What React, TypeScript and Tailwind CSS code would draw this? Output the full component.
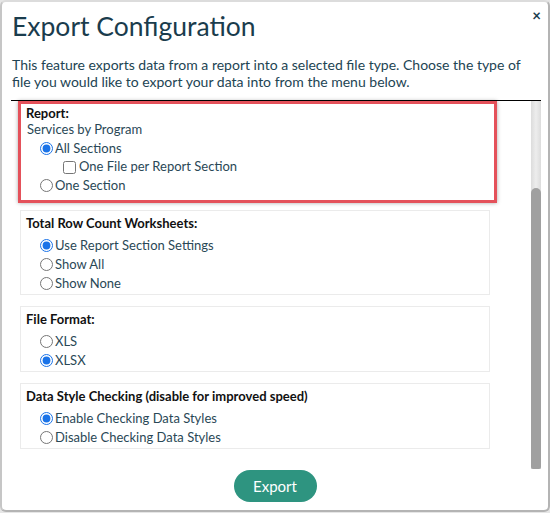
import { ReactNode } from 'react';

const font = { fontFamily: 'Lato, "Open Sans", Arial, sans-serif' };

function Radio({ label, checked, name }: { label: string; checked?: boolean; name: string }) {
    return (
        <label className="flex h-[19px] items-center pl-[14px] text-[13px] text-[#2a4856]">
            <input
                type="radio"
                name={name}
                defaultChecked={checked}
                className="m-0 h-[13px] w-[13px] accent-[#1a73e8]"
            />
            <span className="ml-[2px]">{label}</span>
        </label>
    );
}

function Section({ title, children }: { title: string; children: ReactNode }) {
    return (
        <div className="w-[470px] border border-[#ebebeb] pt-[4px] pb-[1px] pl-[5px]">
            <div className="text-[13px] font-bold leading-[16px] text-[#111]">{title}</div>
            <div className="mt-[5px]">{children}</div>
        </div>
    );
}

export default function App() {
    return (
        <div className="h-[513px] w-[550px] bg-[#e6e6e6]" style={font}>
            <div className="flex h-[512px] flex-col rounded-[6px] border-2 border-[#b4b4b4] border-t-[#dcdcdc] border-l-[#c6c6c6] bg-white">
                <div className="relative px-[10px] pt-[8px]">
                    <h1 className="text-[26.5px] leading-[32px] text-[#1a3c4d]">Export Configuration</h1>
                    <button className="absolute right-[7px] top-[3px] text-[15px] font-bold leading-[20px] text-[#1a3c4d]">
                        ×
                    </button>
                    <p className="mt-[14px] text-[14px] leading-[17px] text-[#224453]">
                        This feature exports data from a report into a selected file type. Choose the type of
                        file you would like to export your data into from the menu below.
                    </p>
                </div>

                <div className="ml-[9px] mr-[7px] mt-[10px] flex h-[369px] border-t border-black">
                    <div className="flex-1 pl-[9px]">
                        <div className="-ml-[2px] mb-[7px] w-[479px] border-[3px] border-[#e4515a] pt-[1px] pb-[5px] pl-[5px] shadow-[0_0_4px_rgba(0,0,0,0.35)]">
                            <div className="text-[13px] font-bold leading-[16px] text-[#111]">Report:</div>
                            <div className="flex h-[18px] items-center pl-[1px] text-[13px] text-[#2a4856]">
                                Services by Program
                            </div>
                            <Radio name="section" label="All Sections" checked />
                            <label className="flex h-[18px] items-center pl-[37px] text-[13px] text-[#2a4856]">
                                <input type="checkbox" className="m-0 h-[13px] w-[13px]" />
                                <span className="ml-[3px]">One File per Report Section</span>
                            </label>
                            <Radio name="section" label="One Section" />
                        </div>

                        <div className="flex flex-col gap-[11px]">
                            <Section title="Total Row Count Worksheets:">
                                <Radio name="rows" label="Use Report Section Settings" checked />
                                <Radio name="rows" label="Show All" />
                                <Radio name="rows" label="Show None" />
                            </Section>
                            <Section title="File Format:">
                                <Radio name="format" label="XLS" />
                                <Radio name="format" label="XLSX" checked />
                            </Section>
                            <Section title="Data Style Checking (disable for improved speed)">
                                <Radio name="styles" label="Enable Checking Data Styles" checked />
                                <Radio name="styles" label="Disable Checking Data Styles" />
                            </Section>
                        </div>
                    </div>

                    <div className="flex w-[10px] flex-col bg-gradient-to-r from-[#dcdcdc] via-[#ededed] to-[#dcdcdc]">
                        <div className="mt-[87px] flex-1 rounded-t-[5px] rounded-b-[2px] bg-[#a0a0a0]" />
                    </div>
                </div>

                <div className="mt-[1px] flex justify-center">
                    <button className="h-[32px] w-[83px] rounded-full bg-[#2e9480] text-[15px] text-white">
                        Export
                    </button>
                </div>
            </div>
        </div>
    );
}
